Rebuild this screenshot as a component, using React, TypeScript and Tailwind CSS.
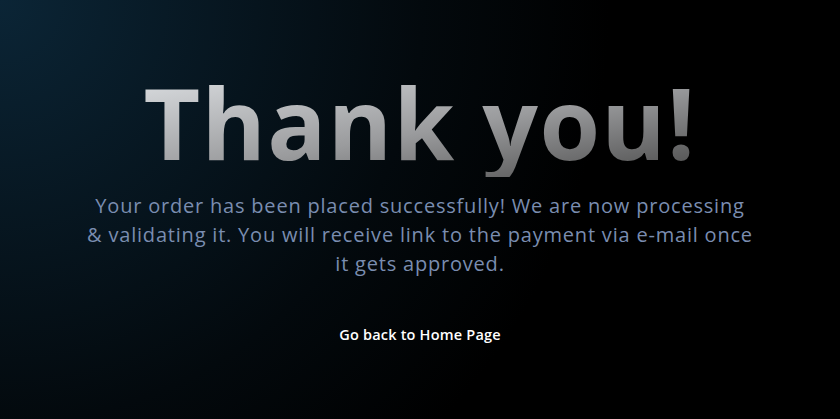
export default function App() {
  return (
    <div
      className="min-h-screen w-full flex flex-col items-center justify-center bg-black bg-[radial-gradient(circle_at_top_left,#0b2536_0%,#03090d_45%,#000_65%)] text-center px-6 pb-[6px]"
      style={{ fontFamily: '"Open Sans", "Liberation Sans", sans-serif' }}
    >
      <h1 className="text-[98px] leading-[110px] font-bold tracking-[1.3px] bg-[linear-gradient(170deg,#e0e3e6_0%,#9a9b9d_55%,#4a4a4a_100%)] bg-clip-text text-transparent">
        Thank you!
      </h1>
      <p className="mt-[14px] text-[20px] leading-[29px] tracking-[0.8px] text-[#7a8db0]">
        Your order has been placed successfully! We are now processing
        <br />
        &amp; validating it. You will receive link to the payment via e-mail once
        <br />
        it gets approved.
      </p>
      <a href="/" className="mt-[46px] text-[14.5px] font-semibold tracking-[0.2px] text-white">
        Go back to Home Page
      </a>
    </div>
  )
}
